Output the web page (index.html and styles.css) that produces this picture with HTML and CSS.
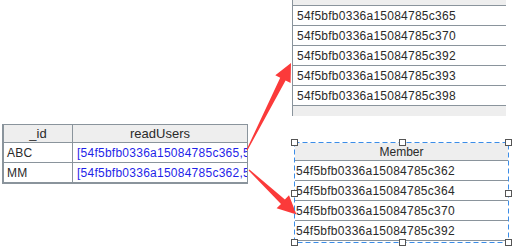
FILE: index.html
```html
<!DOCTYPE html>
<html>
<head>
<meta charset="utf-8">
<link rel="stylesheet" href="styles.css">
</head>
<body>
<div class="canvas">
  <div class="node users">
    <div class="cell head">_id</div>
    <div class="cell head">readUsers</div>
    <div class="cell">ABC</div>
    <div class="cell link">[54f5bfb0336a15084785c365,54f5bfb0336a15084785c370]</div>
    <div class="cell">MM</div>
    <div class="cell link">[54f5bfb0336a15084785c362,54f5bfb0336a15084785c364]</div>
  </div>

  <div class="node members top">
    <div class="mcell head">Member</div>
    <div class="mcell">54f5bfb0336a15084785c365</div>
    <div class="mcell">54f5bfb0336a15084785c370</div>
    <div class="mcell">54f5bfb0336a15084785c392</div>
    <div class="mcell">54f5bfb0336a15084785c393</div>
    <div class="mcell">54f5bfb0336a15084785c398</div>
    <div class="strip"></div>
  </div>

  <div class="node members bottom">
    <div class="mcell head">Member</div>
    <div class="mcell">54f5bfb0336a15084785c362</div>
    <div class="mcell">54f5bfb0336a15084785c364</div>
    <div class="mcell">54f5bfb0336a15084785c370</div>
    <div class="mcell">54f5bfb0336a15084785c392</div>
  </div>

  <svg class="overlay" width="512" height="247" viewBox="0 0 512 247">
    <polygon class="arrow" points="246.5,149.8 280.2,77.8 275.3,75.2 291,63 290.6,83 285.6,80.5 247.5,150.2"/>
    <polygon class="arrow" points="248.6,170.4 281,204 276.6,208.2 296.5,214.5 289,195.2 284.9,199.6 249.4,169.6"/>
    <rect class="sel" x="294.5" y="142.5" width="214" height="100"/>
    <rect class="handle" x="291.5" y="139.5" width="6" height="6"/>
    <rect class="handle" x="399.5" y="139.5" width="6" height="6"/>
    <rect class="handle" x="505.5" y="139.5" width="6" height="6"/>
    <rect class="handle" x="291.5" y="190.5" width="6" height="6"/>
    <rect class="handle" x="505.5" y="190.5" width="6" height="6"/>
    <rect class="handle" x="291.5" y="239.5" width="6" height="6"/>
    <rect class="handle" x="399.5" y="239.5" width="6" height="6"/>
    <rect class="handle" x="505.5" y="239.5" width="6" height="6"/>
  </svg>
</div>
</body>
</html>
```
FILE: styles.css
```css
html, body {
  margin: 0;
  padding: 0;
  background: #ffffff;
}

.canvas {
  position: relative;
  width: 512px;
  height: 247px;
  overflow: hidden;
  font-family: "Liberation Sans", Arial, sans-serif;
  font-size: 12px;
  color: #2a2a2a;
}

.node {
  position: absolute;
  box-sizing: border-box;
}

/* left table */
.users {
  left: 2px;
  top: 124px;
  display: grid;
  grid-template-columns: 69px 175px;
  grid-template-rows: 18px 20px 20px;
  border-top: 1px solid #8a949c;
  border-left: 2px solid #8a949c;
  border-bottom: 1px solid #8a949c;
}

.cell {
  box-sizing: border-box;
  border-right: 1px solid #8a949c;
  border-bottom: 1px solid #8a949c;
  display: flex;
  align-items: center;
  padding-left: 3px;
  white-space: nowrap;
  overflow: hidden;
  letter-spacing: 0.25px;
}

.cell.head {
  background: #eeeeee;
  justify-content: center;
  padding-left: 0;
  letter-spacing: 0;
  font-size: 13px;
}

.cell.link {
  color: #1f1fe8;
  padding-left: 4px;
}

/* member tables */
.members {
  display: flex;
  flex-direction: column;
}

.members.top {
  left: 292px;
  top: -14px;
  width: 214px;
  border-left: 1px solid #8a949c;
}

.members.bottom {
  left: 295px;
  top: 143px;
  width: 213px;
}

.mcell {
  box-sizing: border-box;
  height: 20px;
  border-bottom: 1px solid #8a949c;
  display: flex;
  align-items: center;
  padding-left: 4px;
  white-space: nowrap;
  letter-spacing: 0.25px;
}

.bottom .mcell {
  padding-left: 1px;
}

.mcell.head {
  background: #eeeeee;
  justify-content: center;
  padding-left: 0;
  letter-spacing: 0;
  font-size: 12px;
}

.bottom .mcell.head {
  height: 18px;
  padding-left: 0;
}

.strip {
  height: 10px;
  background: #eeeeee;
}

/* overlay: arrows and selection */
.overlay {
  position: absolute;
  left: 0;
  top: 0;
  pointer-events: none;
}

.arrow {
  fill: #fb3a3a;
}

.sel {
  fill: none;
  stroke: #3b8de8;
  stroke-width: 1;
  stroke-dasharray: 5 3;
}

.handle {
  fill: #ffffff;
  stroke: #555555;
  stroke-width: 1;
}
```
